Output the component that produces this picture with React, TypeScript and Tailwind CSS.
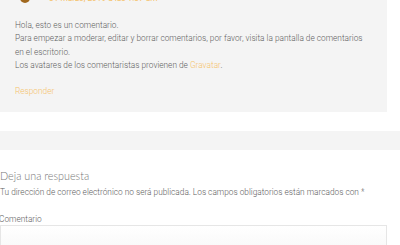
export default function App() {
  const body = { fontFamily: "Roboto, 'Liberation Sans', sans-serif" };
  return (
    <div className="relative h-[245px] w-[400px] overflow-hidden bg-white" style={body}>
      <div className="flow-root h-[112px] w-[387px] bg-[#f4f4f4] pl-[15px]">
        <div className="-mt-[7px] flex h-[10px] items-center">
          <div className="ml-[5px] h-[10px] w-[10px] rounded-full bg-[#a0681e]" />
          <span className="ml-[19px] text-[8.3px] leading-[10px] text-[#f5c26b]">31 marzo, 2019 a las 1:37 am</span>
        </div>
        <div className="mt-[16px] w-[352px] text-[8.3px] font-light leading-[13.3px] text-[#5e5e5e]">
          <p>Hola, esto es un comentario.</p>
          <p>Para empezar a moderar, editar y borrar comentarios, por favor, visita la pantalla de comentarios en el escritorio.</p>
          <p>
            Los avatares de los comentaristas provienen de <span className="text-[#f5c26b]">Gravatar</span>.
          </p>
        </div>
        <div className="mt-[13px] text-[8.3px] font-light leading-[12px] text-[#f5c26b]">Responder</div>
      </div>
      <div className="mt-[19px] h-[19px] w-full bg-[#f4f4f4]" />
      <div className="pt-[18px]">
        <h3 className="text-[10.8px] font-light leading-[16px] text-[#777]" style={{ fontFamily: "Lato, sans-serif" }}>
          Deja una respuesta
        </h3>
        <p className="mt-[2px] text-[8.3px] font-light leading-[12px] text-[#5e5e5e]">
          Tu dirección de correo electrónico no será publicada. Los campos obligatorios están marcados con *
        </p>
        <label className="-ml-[1px] mt-[15px] block text-[8.3px] font-light leading-[12px] text-[#5e5e5e]">Comentario</label>
        <div className="h-[40px] w-[387px] border border-[#e6e6e6] bg-gradient-to-b from-white to-[#f4f4f4]" />
      </div>
    </div>
  );
}
